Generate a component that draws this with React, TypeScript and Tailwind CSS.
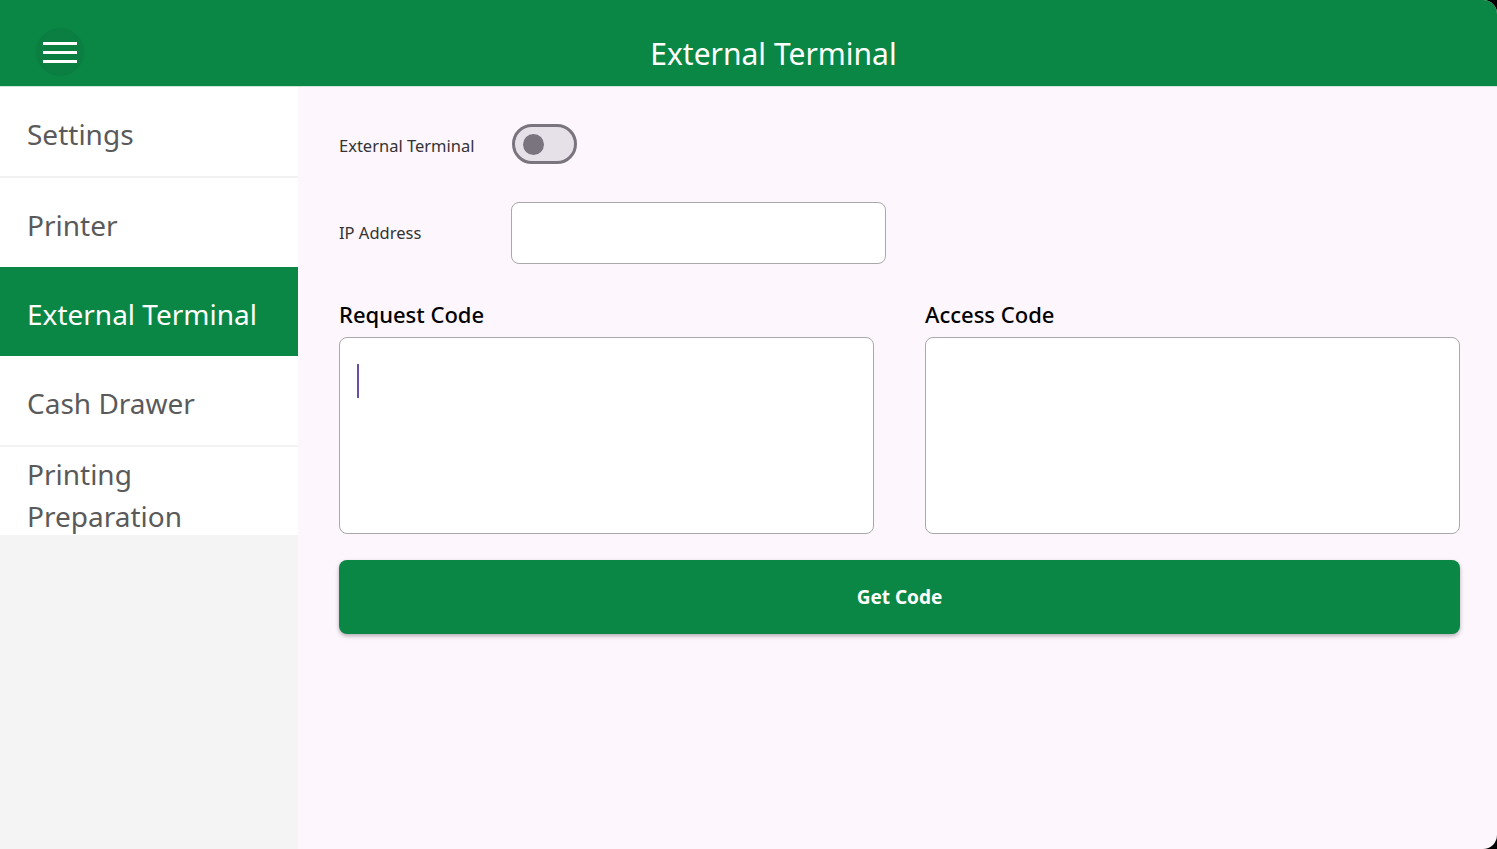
import React from "react";

const font = { fontFamily: '"Noto Sans", "Open Sans", sans-serif' };

function NavItem({ label, active }: { label: React.ReactNode; active?: boolean }) {
  return (
    <div
      className={`flex items-center px-[27px] pt-[5px] h-[89px] ${
        active ? "bg-[#0a8744] text-white" : "bg-white text-[#5a5a5a]"
      } text-[28px] leading-[41px]`}
    >
      {label}
    </div>
  );
}

export default function App() {
  return (
    <div className="w-[1497px] h-[849px] bg-black overflow-hidden" style={font}>
      <div className="w-full h-full flex flex-col rounded-tr-[14px] rounded-br-[14px] overflow-hidden bg-[#fdf6fd]">
        <header className="h-[87px] bg-[#0a8744] flex items-center relative shrink-0 border-b border-[#cfe7d9] pt-[18px]">
          <div className="ml-[36px] w-[48px] h-[48px] rounded-full bg-[#0b7f41] flex flex-col items-center justify-center gap-[6px]">
            <div className="w-[34px] h-[3px] bg-white" />
            <div className="w-[34px] h-[3px] bg-white" />
            <div className="w-[34px] h-[3px] bg-white" />
          </div>
          <div className="absolute left-0 right-0 top-0 bottom-0 flex items-center justify-center pointer-events-none pt-[18px]">
            <span className="text-white text-[30px] ml-[50px] mt-[2px]">External Terminal</span>
          </div>
        </header>
        <div className="flex flex-1 min-h-0">
          <aside className="w-[298px] bg-[#f4f4f4] flex flex-col shrink-0">
            <NavItem label="Settings" />
            <div className="h-[2px] bg-[#f2f2f2]" />
            <NavItem label="Printer" />
            <NavItem label="External Terminal" active />
            <NavItem label="Cash Drawer" />
            <div className="h-[2px] bg-[#f2f2f2]" />
            <div className="bg-white text-[#5a5a5a] text-[28px] leading-[42px] px-[27px] pt-[6px] h-[88px]">
              Printing
              <br />
              Preparation
            </div>
          </aside>
          <main className="flex-1 pl-[41px] pr-[37px] pt-[37px]">
            <div className="flex items-center h-[40px]">
              <span className="w-[173px] text-[16.5px] text-[#333] mt-[4px]">External Terminal</span>
              <div className="w-[65px] h-[40px] rounded-full border-[3px] border-[#79747e] bg-[#e6e0e9] flex items-center pl-[8px]">
                <div className="w-[21px] h-[21px] rounded-full bg-[#79747e]" />
              </div>
            </div>
            <div className="flex items-center mt-[38px]">
              <span className="w-[172px] text-[16.5px] text-[#333]">IP Address</span>
              <div className="w-[375px] h-[62px] bg-white border border-[#a9a9a9] rounded-[8px]" />
            </div>
            <div className="flex gap-[51px] mt-[35px]">
              <div className="flex-1 flex flex-col">
                <span className="text-[22px] font-medium text-black leading-[30px]">Request Code</span>
                <div className="mt-[8px] h-[197px] bg-white border border-[#a9a9a9] rounded-[8px] pl-[17px] pt-[26px]">
                  <div className="w-[2px] h-[34px] bg-[#6750a4]" />
                </div>
              </div>
              <div className="flex-1 flex flex-col">
                <span className="text-[22px] font-medium text-black leading-[30px]">Access Code</span>
                <div className="mt-[8px] h-[197px] bg-white border border-[#a9a9a9] rounded-[8px]" />
              </div>
            </div>
            <button className="mt-[26px] w-full h-[74px] bg-[#0a8744] rounded-[8px] shadow-[0_2px_4px_rgba(0,0,0,0.3)] text-white text-[19px] font-bold">
              Get Code
            </button>
          </main>
        </div>
      </div>
    </div>
  );
}
